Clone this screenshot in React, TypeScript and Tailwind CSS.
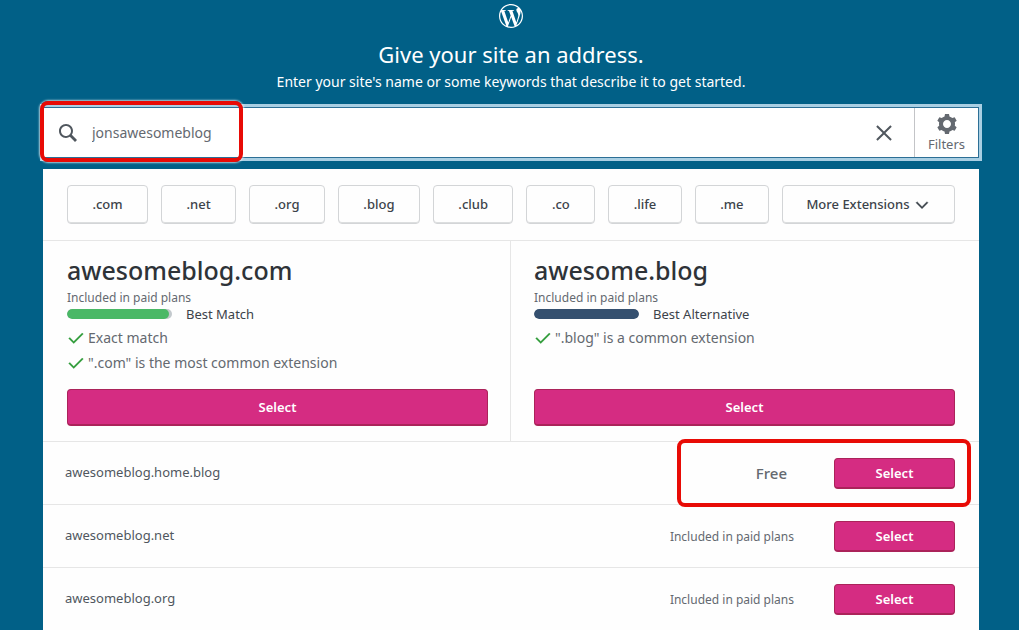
import { useState } from 'react'
import { clsx } from 'clsx'
import { SiWordpress } from 'react-icons/si'

type Suggestion = {
  domain: string
  label: string
  score: number
  barClass: string
  reasons: string[]
}

type Result = {
  domain: string
  price: string
  free?: boolean
}

const EXTENSIONS = ['.com', '.net', '.org', '.blog', '.club', '.co', '.life', '.me']

const FEATURED: Suggestion[] = [
  {
    domain: 'awesomeblog.com',
    label: 'Best Match',
    score: 97,
    barClass: 'bg-[#4ab866]',
    reasons: ['Exact match', '".com" is the most common extension'],
  },
  {
    domain: 'awesome.blog',
    label: 'Best Alternative',
    score: 100,
    barClass: 'bg-[#35506f]',
    reasons: ['".blog" is a common extension'],
  },
]

const RESULTS: Result[] = [
  { domain: 'awesomeblog.home.blog', price: 'Free', free: true },
  { domain: 'awesomeblog.net', price: 'Included in paid plans' },
  { domain: 'awesomeblog.org', price: 'Included in paid plans' },
]

const ICONS = {
  search: 'M21 19l-5.154-5.154C16.574 12.742 17 11.42 17 10c0-3.866-3.134-7-7-7s-7 3.134-7 7 3.134 7 7 7c1.42 0 2.742-.426 3.846-1.154L19 21l2-2zM5 10c0-2.757 2.243-5 5-5s5 2.243 5 5-2.243 5-5 5-5-2.243-5-5z',
  cross: 'M18.36 19.78L12 13.41l-6.36 6.37-1.42-1.42L10.59 12 4.22 5.64l1.42-1.42L12 10.59l6.36-6.36 1.41 1.41L13.41 12l6.36 6.36z',
  cog: 'M20 12c0-.568-.06-1.122-.174-1.656l1.834-1.612-2-3.464-2.322.786c-.82-.736-1.787-1.308-2.86-1.657L14 2h-4l-.48 2.396c-1.07.35-2.04.92-2.858 1.657L4.34 5.268l-2 3.464 1.834 1.612C4.06 10.878 4 11.432 4 12s.06 1.122.174 1.656L2.34 15.268l2 3.464 2.322-.786c.82.736 1.787 1.308 2.86 1.657L10 22h4l.48-2.396c1.07-.35 2.038-.92 2.858-1.657l2.322.786 2-3.464-1.834-1.612c.113-.535.174-1.09.174-1.656zm-8 4c-2.21 0-4-1.79-4-4s1.79-4 4-4 4 1.79 4 4-1.79 4-4 4z',
  chevron: 'M20 9l-8 8-8-8 1.414-1.414L12 14.172l6.586-6.586z',
  check: 'M9 19.414l-6.707-6.707 1.414-1.414L9 16.586 20.293 5.293l1.414 1.414z',
}

function Icon({ name, className }: { name: keyof typeof ICONS; className?: string }) {
  return (
    <svg viewBox="0 0 24 24" fill="currentColor" className={clsx('shrink-0', className)} aria-hidden="true">
      <path d={ICONS[name]} />
    </svg>
  )
}

function SelectButton({ className }: { className?: string }) {
  return (
    <button
      className={clsx(
        'rounded-[4px] border border-b-2 border-[#ab235a] bg-[#d52c82] text-[13px] leading-5 font-semibold text-white hover:bg-[#e34397]',
        className,
      )}
    >
      Select
    </button>
  )
}

function FeaturedCard({ item }: { item: Suggestion }) {
  return (
    <div className="flex flex-col border-[#e6e6e6] pt-[11px] pb-[15px] first:border-r first:pr-[22px] last:pl-[23px]">
      <h2 className="text-[25px] leading-9 font-medium text-[#2e3338]">{item.domain}</h2>
      <p className="mt-[3px] text-xs leading-[14px] text-[#646970]">Included in paid plans</p>
      <div className="flex items-center gap-[14px]">
        <div className="h-2.5 w-[105px] overflow-hidden rounded-full bg-[#c3c9cd]">
          <div className={clsx('h-full rounded-full', item.barClass)} style={{ width: `${item.score}%` }} />
        </div>
        <span className="text-[13px] leading-[18px] text-[#3c434a]">{item.label}</span>
      </div>
      <ul className="mt-0.5 text-sm leading-[25px] text-[#646970]">
        {item.reasons.map(reason => (
          <li key={reason} className="flex items-center gap-[3px]">
            <Icon name="check" className="size-[18px] stroke-[#2b9a35] text-[#2b9a35] [stroke-width:0.5]" />
            {reason}
          </li>
        ))}
      </ul>
      <SelectButton className="mt-auto h-[37px] w-full" />
    </div>
  )
}

export default function App() {
  const [query, setQuery] = useState('jonsawesomeblog')

  return (
    <div className="h-screen overflow-hidden bg-[#016087] pr-10 pl-[43px] font-['Noto_Sans',sans-serif]">
      <header className="flex flex-col items-center pt-1 pb-[15px] text-white">
        <SiWordpress className="size-6" />
        <h1 className="mt-2.5 text-[22px] leading-8">Give your site an address.</h1>
        <p className="mt-0.5 text-sm leading-5">Enter your site's name or some keywords that describe it to get started.</p>
      </header>

      <div className="relative flex h-[51px] border border-[#2c6f96] bg-white ring-3 ring-[#a9cfe3]">
        <label htmlFor="domain-search" className="flex items-center px-3 text-[#50575e]">
          <Icon name="search" className="size-6" />
        </label>
        <input
          id="domain-search"
          aria-label="Search for a domain"
          value={query}
          onChange={e => setQuery(e.target.value)}
          className="min-w-0 flex-1 bg-transparent text-sm leading-6 text-[#646970] outline-none"
        />
        <button onClick={() => setQuery('')} aria-label="Clear search" className="px-[18px] text-[#50575e]">
          <Icon name="cross" className="size-6" />
        </button>
        <button className="flex w-16 flex-col items-center border-l border-[#c3c4c7] pt-1 text-[#646970]">
          <Icon name="cog" className="size-6" />
          <span className="text-[13px] leading-4">Filters</span>
        </button>
        <div className="pointer-events-none absolute -top-[7px] -left-1 h-[61px] w-[203px] rounded-lg border-4 border-[#e80b06] shadow-[0_0_2px_1px_#ffffffb0]" />
      </div>

      <main className="mt-[11px] bg-[#fefefe]">
        <div className="flex gap-[13px] border-b border-[#e6e6e6] px-6 py-4">
          {EXTENSIONS.map(ext => (
            <button
              key={ext}
              className="h-[39px] flex-auto rounded-[4px] border border-[#d3d5d7] px-5 text-[13px] font-medium text-[#3c434a] shadow-[inset_0_-1px_0_#dcdedf]"
            >
              {ext}
            </button>
          ))}
          <button className="flex h-[39px] flex-auto items-center justify-center gap-[3px] rounded-[4px] border border-[#d3d5d7] px-[19px] text-[13px] font-medium text-[#3c434a] shadow-[inset_0_-1px_0_#dcdedf]">
            More Extensions
            <Icon name="chevron" className="size-[18px] stroke-[#3c434a] [stroke-width:0.5]" />
          </button>
        </div>

        <div className="grid h-[201px] grid-cols-2 border-b border-[#e6e6e6] px-6">
          {FEATURED.map(item => (
            <FeaturedCard key={item.domain} item={item} />
          ))}
        </div>

        {RESULTS.map(result => (
          <div
            key={result.domain}
            className="relative flex h-[63px] items-center border-b border-[#e6e6e6] pr-6 pl-[22px]"
          >
            <h3 className="flex-1 text-[13px] text-[#50575e]">{result.domain}</h3>
            <span className={clsx('mr-10 text-[#646970]', result.free ? 'px-[7px] text-[15px] font-medium' : 'pt-0.5 text-xs')}>
              {result.price}
            </span>
            <SelectButton className="h-[31px] w-[121px]" />
            {result.free && (
              <div className="pointer-events-none absolute -top-[3px] right-2 h-[68px] w-[294px] rounded-lg border-4 border-[#e80b06]" />
            )}
          </div>
        ))}
      </main>
    </div>
  )
}
